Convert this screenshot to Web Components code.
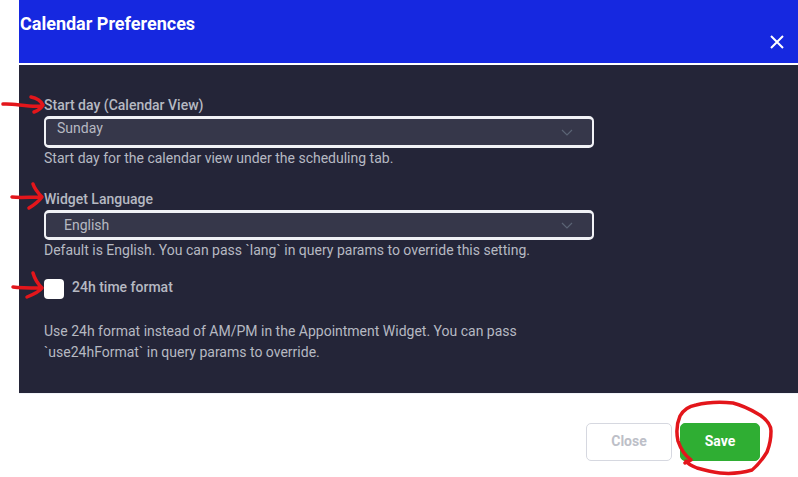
<!DOCTYPE html>
<html>
<head>
<meta charset="utf-8">
<title>Calendar Preferences</title>
<style>
  html, body { margin: 0; height: 100%; background: #fff; font-family: Roboto, "Liberation Sans", sans-serif; overflow: hidden; }
</style>
</head>
<body>
<pref-dialog heading="Calendar Preferences">
  <pref-field label="Start day (Calendar View)" value="Sunday" indent="13" shift="-4" hint="Start day for the calendar view under the scheduling tab." style="--select-h:32px"></pref-field>
  <pref-field label="Widget Language" value="English" indent="20" shift="0" hint="Default is English. You can pass `lang` in query params to override this setting." style="--field-top:21px;--select-h:30px"></pref-field>
  <pref-check label="24h time format">Use 24h format instead of AM/PM in the Appointment Widget. You can pass<br>`use24hFormat` in query params to override.</pref-check>
  <pref-button slot="footer" kind="ghost">Close</pref-button>
  <pref-button slot="footer" kind="save">Save</pref-button>
</pref-dialog>
<pref-scribbles></pref-scribbles>

<script>
class PrefDialog extends HTMLElement {
  constructor() {
    super();
    this.attachShadow({ mode: 'open' });
  }

  connectedCallback() {
    this.shadowRoot.innerHTML = `
      <style>
        :host { display: flex; flex-direction: column; margin-left: 19px; height: 477px; }
        .head {
          height: 63px;
          flex: none;
          background: #1628e0;
          border-bottom: 2px solid #fff;
          display: flex;
          justify-content: space-between;
          color: #fff;
        }
        h2 { margin: 13px 0 0 1px; font-size: 18px; line-height: 22px; font-weight: 700; }
        .x { width: 16px; height: 16px; margin: 34px 13px 0 0; }
        .body {
          height: 328px;
          flex: none;
          box-sizing: border-box;
          background: #242538;
          padding: 30px 25px 0;
        }
        .foot {
          display: flex;
          justify-content: flex-end;
          gap: 8px;
          padding: 29px 38px 0 0;
          border-top: 1px solid #f1f4f9;
        }
      </style>
      <div class="head">
        <h2>${this.getAttribute('heading')}</h2>
        <svg class="x" viewBox="0 0 16 16"><path d="M2 2 L14 14 M14 2 L2 14" stroke="#fff" stroke-width="2" fill="none"/></svg>
      </div>
      <div class="body"><slot></slot></div>
      <div class="foot"><slot name="footer"></slot></div>
    `;
  }
}

class PrefField extends HTMLElement {
  constructor() {
    super();
    this.attachShadow({ mode: 'open' });
  }

  connectedCallback() {
    const indent = this.getAttribute('indent');
    const shift = this.getAttribute('shift');
    this.shadowRoot.innerHTML = `
      <style>
        :host { display: block; width: 550px; margin-top: var(--field-top, 0); color: #b6b9c2; font-size: 14px; line-height: 20px; }
        .label { font-weight: 500; display: block; margin-bottom: 1px; }
        .select {
          box-sizing: border-box;
          height: var(--select-h);
          border: solid #f1f2f6;
          border-width: 3px 2px;
          border-radius: 5px;
          background: #36374a;
          display: flex;
          align-items: center;
          justify-content: space-between;
          padding-left: ${indent - 2}px;
          padding-right: 19px;
        }
        .value { position: relative; top: ${shift}px; }
        svg { width: 12px; height: 7px; }
      </style>
      <span class="label">${this.getAttribute('label')}</span>
      <div class="select">
        <span class="value">${this.getAttribute('value')}</span>
        <svg viewBox="0 0 12 7"><path d="M1 1 L6 6 L11 1" stroke="#5b6475" stroke-width="1.2" fill="none"/></svg>
      </div>
      <div class="hint">${this.getAttribute('hint')}</div>
    `;
  }
}

class PrefCheck extends HTMLElement {
  constructor() {
    super();
    this.attachShadow({ mode: 'open' });
  }

  connectedCallback() {
    this.shadowRoot.innerHTML = `
      <style>
        :host { display: block; width: 550px; margin-top: 19px; color: #b6b9c2; font-size: 14px; line-height: 20px; }
        .row { display: flex; align-items: center; gap: 8px; font-weight: 500; }
        .box { width: 20px; height: 20px; border-radius: 4px; background: #fff; }
        .row span { position: relative; top: -2px; }
        .text { margin-top: 22px; line-height: 21px; }
      </style>
      <div class="row"><div class="box"></div><span>${this.getAttribute('label')}</span></div>
      <div class="text"><slot></slot></div>
    `;
  }
}

class PrefButton extends HTMLElement {
  constructor() {
    super();
    this.attachShadow({ mode: 'open' });
  }

  connectedCallback() {
    const save = this.getAttribute('kind') === 'save';
    this.shadowRoot.innerHTML = `
      <style>
        :host { display: block; }
        button {
          box-sizing: border-box;
          height: 38px;
          width: ${save ? 80 : 86}px;
          border-radius: 5px;
          font: 700 14px Roboto, "Liberation Sans", sans-serif;
          padding: 0 0 2px;
          border: 1px solid ${save ? '#2fae33' : '#d6d8e0'};
          background: ${save ? '#2fae33' : '#fff'};
          color: ${save ? '#fff' : '#bdbfc8'};
        }
      </style>
      <button><slot></slot></button>
    `;
  }
}

// red marker strokes drawn over the screenshot
class PrefScribbles extends HTMLElement {
  constructor() {
    super();
    this.attachShadow({ mode: 'open' });
  }

  connectedCallback() {
    this.shadowRoot.innerHTML = `
      <style>
        :host { position: absolute; left: 0; top: 0; width: 798px; height: 477px; pointer-events: none; }
        svg { display: block; }
        path { fill: none; stroke: #e3161b; stroke-linecap: round; stroke-linejoin: round; }
      </style>
      <svg width="798" height="477" viewBox="0 0 798 477">
        <path stroke-width="3.5" d="M3 104 C14 103 26 107 41 106 M31 97 C36 98 41 101 43 105 C41 109 37 111 34 112"/>
        <path stroke-width="3.5" d="M12 197 C20 198 30 197 41 197 M33 184 C35 190 39 194 42 197 C39 201 34 205 29 208"/>
        <path stroke-width="3.5" d="M13 287 C20 288 30 288 41 288 M33 273 C35 280 39 285 42 288 C39 292 32 295 27 297"/>
        <path stroke-width="3.5" d="M685 463 L691 460 C687 457 681 450 678 441 C676 432 677 423 680 416 C684 409 690 406 696 405 C708 402 722 402 733 403 C745 406 753 411 760 415 C767 420 771 425 771 431 C771 440 769 447 767 452 C762 460 757 466 752 470 C742 473 731 474 720 473 C711 472 704 470 697 468 C692 466 688 464 686 461"/>
      </svg>
    `;
  }
}

customElements.define('pref-dialog', PrefDialog);
customElements.define('pref-field', PrefField);
customElements.define('pref-check', PrefCheck);
customElements.define('pref-button', PrefButton);
customElements.define('pref-scribbles', PrefScribbles);
</script>
</body>
</html>
